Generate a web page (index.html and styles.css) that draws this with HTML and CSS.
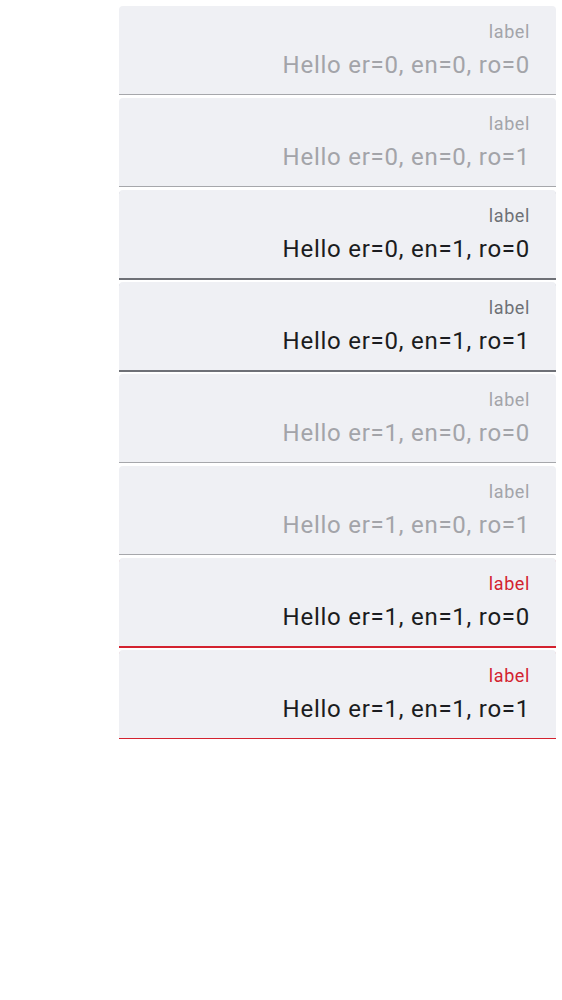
FILE: index.html
```html
<!DOCTYPE html>
<html>
<head>
<meta charset="utf-8">
<link rel="stylesheet" href="styles.css">
</head>
<body>
<div class="list">
  <div class="field disabled"><div class="label">label</div><div class="value">Hello er=0, en=0, ro=0</div></div>
  <div class="field disabled"><div class="label">label</div><div class="value">Hello er=0, en=0, ro=1</div></div>
  <div class="field enabled"><div class="label">label</div><div class="value">Hello er=0, en=1, ro=0</div></div>
  <div class="field enabled"><div class="label">label</div><div class="value">Hello er=0, en=1, ro=1</div></div>
  <div class="field disabled"><div class="label">label</div><div class="value">Hello er=1, en=0, ro=0</div></div>
  <div class="field disabled"><div class="label">label</div><div class="value">Hello er=1, en=0, ro=1</div></div>
  <div class="field error"><div class="label">label</div><div class="value">Hello er=1, en=1, ro=0</div></div>
  <div class="field error"><div class="label">label</div><div class="value">Hello er=1, en=1, ro=1</div></div>
</div>
</body>
</html>
```

FILE: styles.css
```css
html, body {
  margin: 0;
  padding: 0;
  background: #ffffff;
  font-family: Roboto, "Liberation Sans", sans-serif;
}
.list {
  display: flex;
  flex-direction: column;
  gap: 3px;
  padding: 6px 6px 0 119px;
}
.field {
  box-sizing: border-box;
  height: 89px;
  background: #eff0f4;
  border-radius: 4px 4px 0 0;
  border-bottom: 1px solid #a6a7ab;
  padding: 14px 26px 0 26px;
  text-align: right;
}
.label {
  font-size: 18px;
  line-height: 24px;
  letter-spacing: 0.6px;
}
.value {
  font-size: 24px;
  line-height: 32px;
  letter-spacing: 0.75px;
  margin-top: 5px;
}
.disabled .label { color: #a3a4a9; }
.disabled .value { color: #a3a4a9; }
.enabled {
  border-bottom-color: #6e7076;
  box-shadow: 0 1px 0 #6e7076;
}
.enabled .label { color: #6e7076; }
.enabled .value { color: #1b1c20; }
.error {
  border-bottom-color: #d3222f;
  box-shadow: 0 1px 0 #d3222f;
}
.error .label { color: #d3222f; }
.error .value { color: #1b1c20; }
```
